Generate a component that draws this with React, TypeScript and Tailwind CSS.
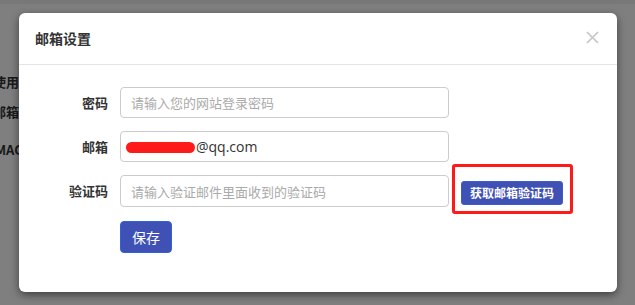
import { useState } from 'react'

export default function App() {
  const [password, setPassword] = useState('')
  const [code, setCode] = useState('')

  return (
    <div className="relative h-[305px] w-[635px] overflow-hidden bg-white" style={{ fontFamily: '"Noto Sans CJK SC", "Noto Sans", sans-serif' }}>
      {/* page behind the dialog */}
      <div className="border-t-[4px] border-[#f0f0f0]">
        <div className="-ml-[7px] flex flex-col pt-[68px] text-[13px] font-bold leading-[20px] text-[#333]">
          <div>使用邮箱登录</div>
          <div className="mt-[10px]">邮箱设置</div>
          <div className="mt-[18px] pl-[2px]">MAC 地址</div>
        </div>
      </div>

      {/* overlay */}
      <div className="absolute inset-0 bg-black/50" />

      {/* dialog */}
      <div className="absolute left-[19px] top-[13px] h-[279px] w-[598px] rounded-[6px] bg-white shadow-[0_3px_9px_rgba(0,0,0,0.5)]">
        <div className="flex h-[52px] items-center justify-between border-b border-[#e5e5e5] pl-[16px] pr-[18px]">
          <h4 className="text-[14px] font-bold text-[#333]">邮箱设置</h4>
          <button className="-mt-[2px] flex h-[14px] w-[14px] items-center justify-center">
            <svg width="13" height="13" viewBox="0 0 13 13">
              <path d="M1 1 L12 12 M12 1 L1 12" stroke="#c4c4c4" strokeWidth="1.6" />
            </svg>
          </button>
        </div>

        <div className="flex flex-col gap-[13px] pt-[22px]">
          <div className="flex items-center">
            <label className="w-[89px] text-right text-[13px] font-bold text-[#333]">密码</label>
            <input
              value={password}
              onChange={(e) => setPassword(e.target.value)}
              placeholder="请输入您的网站登录密码"
              className="ml-[12px] h-[31px] w-[329px] rounded-[4px] border border-[#ccc] px-[10px] text-[13px] text-[#555] outline-none placeholder:text-[#aaa]"
            />
          </div>

          <div className="flex items-center">
            <label className="w-[89px] text-right text-[13px] font-bold text-[#333]">邮箱</label>
            <div className="ml-[12px] flex h-[31px] w-[329px] items-center rounded-[4px] border border-[#ccc] pl-[5px] text-[14px] text-[#333]">
              <span className="mt-[1px] h-[11px] w-[69px] rounded-full bg-[#ff1a1a]" />
              <span className="ml-[1px]" style={{ fontFamily: '"Open Sans", "Noto Sans", sans-serif' }}>@qq.com</span>
            </div>
          </div>

          <div className="flex items-start">
            <label className="flex h-[31px] w-[89px] items-center justify-end text-[13px] font-bold text-[#333]">验证码</label>
            <input
              value={code}
              onChange={(e) => setCode(e.target.value)}
              placeholder="请输入验证邮件里面收到的验证码"
              className="ml-[12px] h-[32px] w-[329px] rounded-[4px] border border-[#ccc] px-[10px] text-[13px] text-[#555] outline-none placeholder:text-[#aaa]"
            />
            {/* red highlight box round the button */}
            <div className="-mb-[6px] -mt-[11px] ml-[3px] rounded-[3px] border-[3px] border-[#ff1a1a] pb-[6px] pl-[6px] pr-[7px] pt-[12px]">
              <button className="h-[24px] w-[102px] rounded-[3px] border border-[#3d5bd6] bg-[#3f51b5] text-[12px] font-bold text-white">
                获取邮箱验证码
              </button>
            </div>
          </div>

          <div className="flex">
            <button className="ml-[101px] h-[32px] w-[52px] rounded-[4px] border border-[#2f62e0] bg-[#3f51b5] text-[14px] text-white">
              保存
            </button>
          </div>
        </div>
      </div>
    </div>
  )
}
